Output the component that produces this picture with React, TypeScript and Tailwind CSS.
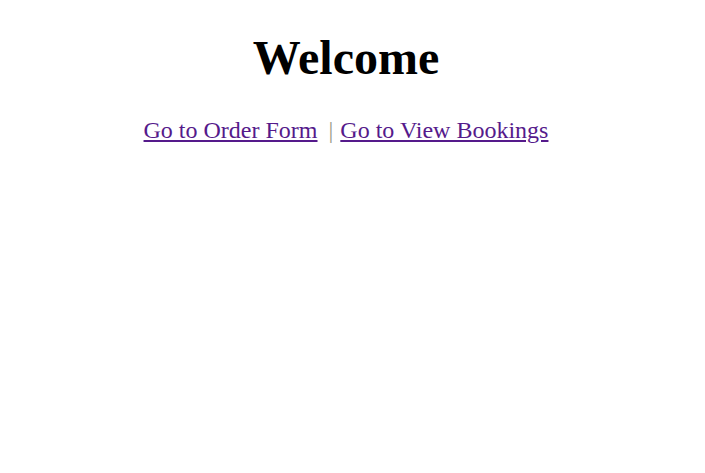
import React from "react";

const App: React.FC = () => {
  return (
    <div className="min-h-[473px] w-full bg-white font-['Liberation_Serif',serif] text-black">
      <div className="flex w-[692px] flex-col items-center">
        <h1 className="mt-[30px] text-[48px] font-bold leading-[55px]">
          Welcome
        </h1>
        <nav className="mt-[31px] flex items-baseline text-[24px] leading-[28px]">
          <a href="#" className="text-[#551a8b] underline">
            Go to Order Form
          </a>
          <span className="ml-[11px] mr-[7px] text-[#9a9a86]">|</span>
          <a href="#" className="text-[#551a8b] underline">
            Go to View Bookings
          </a>
        </nav>
      </div>
    </div>
  );
};

export default App;
